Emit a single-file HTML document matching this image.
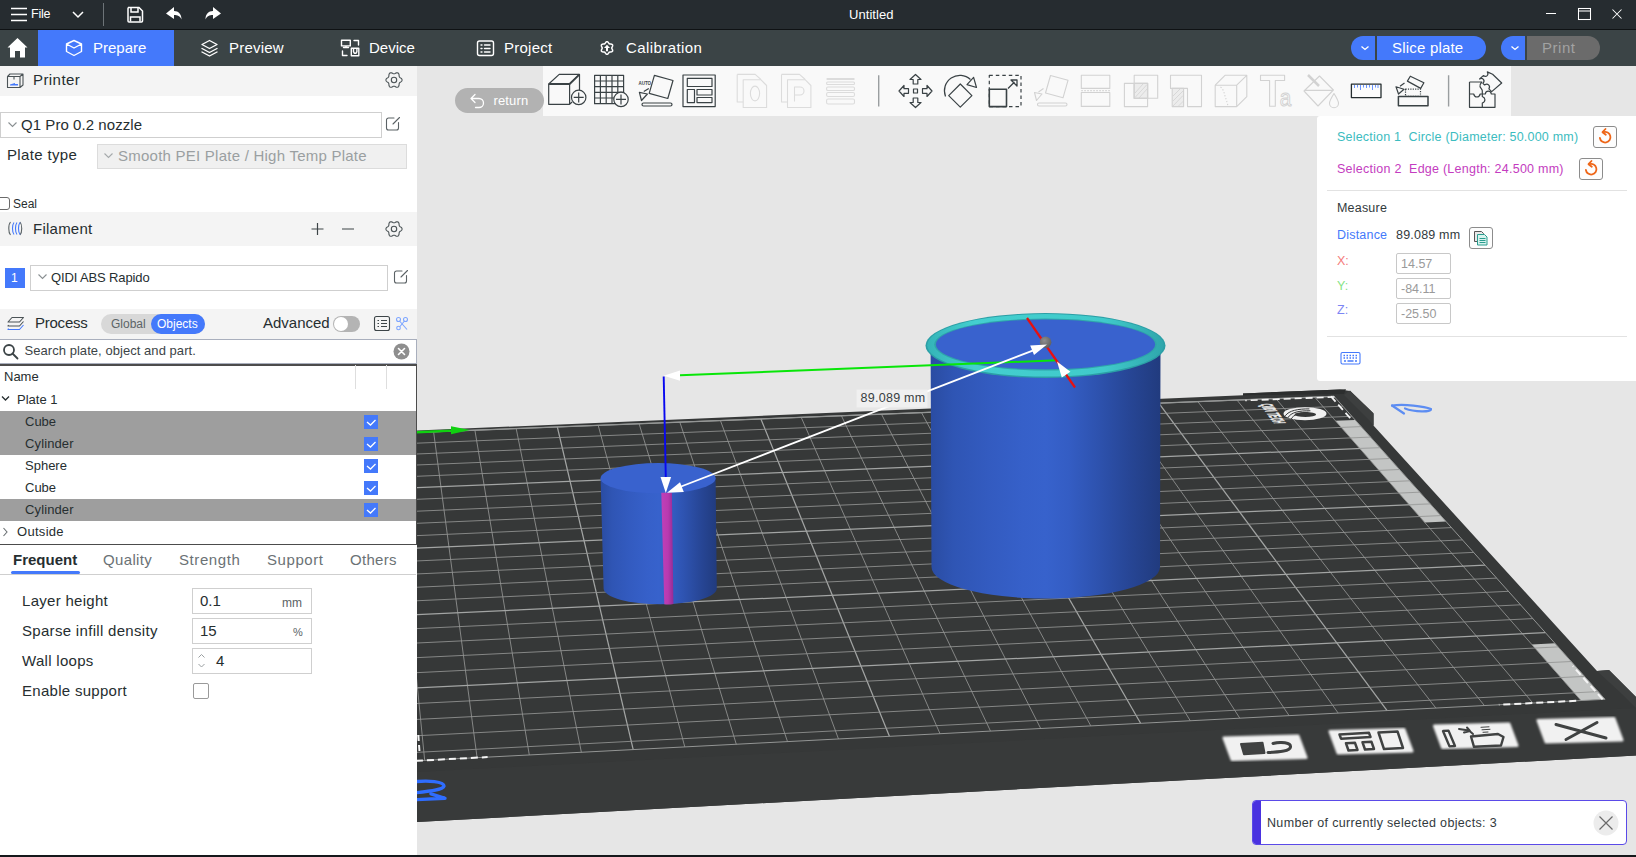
<!DOCTYPE html>
<html lang="en">
<head>
<meta charset="utf-8">
<title>Untitled</title>
<style>
*{box-sizing:border-box;margin:0;padding:0}
html,body{width:1636px;height:857px;overflow:hidden;background:#e6e6e6;font-family:"Liberation Sans",sans-serif;color:#262e30}
.abs{position:absolute}
#app{position:relative;width:1636px;height:857px;overflow:hidden}
#titlebar{left:0;top:0;width:1636px;height:30px;background:#262c30;border-bottom:1px solid #0f1214}
#tabbar{left:0;top:30px;width:1636px;height:36px;background:#3b4446}
.t{position:absolute;white-space:nowrap;line-height:1}
.w{color:#fff}
#left{left:0;top:66px;width:417px;height:789px;background:#fff}
.hdr{position:absolute;left:0;width:417px;background:#f4f4f4}
.box{position:absolute;border:1px solid #cfcfcf;background:#fff}
.row{position:absolute;left:0;width:416px;height:22px}
.sel{background:#9e9e9e}
.cb{position:absolute;width:14px;height:14px;background:#4479fb}
#viewport{left:417px;top:66px;width:1219px;height:789px;background:#e6e6e6;overflow:hidden}
#bottomedge{left:0;top:855px;width:1636px;height:2px;background:#15181b}
</style>
</head>
<body>
<div id="app">
<div id="titlebar" class="abs">
  <svg class="abs" style="left:0;top:0" width="240" height="30" viewBox="0 0 240 30" fill="none" stroke="#fff">
    <path d="M11 8.5H27M11 14.5H27M11 20.5H27" stroke-width="1.6"/>
    <path d="M73 12l5 5 5-5" stroke-width="1.5"/>
    <path d="M103.5 3V26" stroke="#6d7478" stroke-width="1"/>
    <path d="M128 7.5h11l3.500 3.500v10a1 1 0 0 1-1 1h-12.500a1 1 0 0 1-1-1v-12.500a1 1 0 0 1 1-1z" stroke-width="1.5"/>
    <path d="M131 7.500v4.500h7v-4.500M130.500 21.500v-4.500h9.500v4.500" stroke-width="1.5"/>
    <path d="M166 13.500l8-6.500v4c4.500 0 7.500 3 7.500 8.500c-1.500-3.500-4-4.500-7.500-4.500v4z" fill="#fff" stroke="none"/>
    <path d="M221 13.500l-8-6.500v4c-4.500 0-7.500 3-7.500 8.500c1.500-3.500 4-4.500 7.500-4.500v4z" fill="#fff" stroke="none"/>
  </svg>
  <span class="t w" style="left:31px;top:8px;font-size:12.500px;letter-spacing:-0.2px">File</span>
  <span class="t w" style="left:849px;top:8px;font-size:13px;letter-spacing:0.05px">Untitled</span>
  <svg class="abs" style="left:1536px;top:0" width="100" height="30" viewBox="0 0 100 30" fill="none" stroke="#fff" stroke-width="1.050">
    <path d="M10 13.500H20"/>
    <rect x="42.500" y="8.500" width="12" height="11"/><path d="M42.500 11H54.500"/>
    <path d="M76.500 9.500l9 9M85.500 9.500l-9 9"/>
  </svg>
</div>
<div id="tabbar" class="abs">
  <div class="abs" style="left:38px;top:0;width:136px;height:36px;background:#4479fb"></div>
  <svg class="abs" style="left:0;top:0" width="720" height="36" viewBox="0 0 720 36" fill="none" stroke="#fff" stroke-width="1.4" stroke-linejoin="round" stroke-linecap="round">
    <path d="M17.500 8L7.500 17.500H10V27.500H15V21H20V27.500H25V17.500H27.500Z" fill="#fff" stroke="none"/>
    <path d="M74 10.500l7.500 3.500v7.500l-7.500 4l-7.500-4v-7.500z M66.500 14l7.500 4l7.500-4"/>
    <path d="M209.500 10.500l7.500 4l-7.500 4l-7.500-4z M202 18.500l7.500 4l7.500-4 M202 22l7.500 4l7.500-4"/>
    <path d="M341.500 10.300h8.800v5.600h-8.800zM343.500 17.500h5M346 16v1.500M354 10.500h4.500v4.500M342.500 21v4.500h4.500M351.300 18.300h7.500v7.500h-7.500zM353.500 18.500v3.200l.8 1.500h1.800l.8-1.500v-3.200"/>
    <rect x="477.500" y="11" width="16" height="14.500" rx="2"/><path d="M481 15h1M484.500 15h5.500M481 18.500h1M484.500 18.500h5.500M481 22h1M484.500 22h5.500"/>
    <path d="M611.75 18.00 L611.84 18.42 L612.07 18.89 L612.36 19.44 L612.59 20.04 L612.66 20.64 L612.50 21.18 L612.11 21.58 L611.56 21.82 L610.92 21.92 L610.31 21.95 L609.79 21.98 L609.38 22.11 L609.05 22.40 L608.76 22.84 L608.44 23.36 L608.03 23.86 L607.54 24.22 L607.00 24.35 L606.46 24.22 L605.97 23.86 L605.56 23.36 L605.24 22.84 L604.95 22.40 L604.62 22.11 L604.21 21.98 L603.69 21.95 L603.08 21.92 L602.44 21.82 L601.89 21.58 L601.50 21.18 L601.34 20.64 L601.41 20.04 L601.64 19.44 L601.93 18.89 L602.16 18.42 L602.25 18.00 L602.16 17.58 L601.93 17.11 L601.64 16.56 L601.41 15.96 L601.34 15.36 L601.50 14.82 L601.89 14.42 L602.44 14.18 L603.08 14.08 L603.69 14.05 L604.21 14.02 L604.62 13.89 L604.95 13.60 L605.24 13.16 L605.56 12.64 L605.97 12.14 L606.46 11.78 L607.00 11.65 L607.54 11.78 L608.03 12.14 L608.44 12.64 L608.76 13.16 L609.05 13.60 L609.38 13.89 L609.79 14.02 L610.31 14.05 L610.92 14.08 L611.56 14.18 L612.11 14.42 L612.50 14.82 L612.66 15.36 L612.59 15.96 L612.36 16.56 L612.07 17.11 L611.84 17.58Z" stroke-width="1.500"/><path d="M607 14.800l3 3.300h-2v3.200h-2v-3.200h-2z" fill="#fff" stroke="none"/>
  </svg>
  <span class="t w" style="left:93px;top:10px;font-size:15px">Prepare</span>
  <span class="t w" style="left:229px;top:10px;font-size:15px;letter-spacing:0.2px">Preview</span>
  <span class="t w" style="left:369px;top:10px;font-size:15px">Device</span>
  <span class="t w" style="left:504px;top:10px;font-size:15px;letter-spacing:0.25px">Project</span>
  <span class="t w" style="left:626px;top:10px;font-size:15px;letter-spacing:0.42px">Calibration</span>
  <div class="abs" style="left:1351px;top:6px;width:24px;height:24px;background:#4479fb;border-radius:12px 0 0 12px"></div>
  <div class="abs" style="left:1377px;top:6px;width:109px;height:24px;background:#4479fb;border-radius:0 12px 12px 0"></div>
  <span class="t w" style="left:1392px;top:10px;font-size:15px;letter-spacing:0.2px">Slice plate</span>
  <div class="abs" style="left:1501px;top:6px;width:24px;height:24px;background:#4479fb;border-radius:12px 0 0 12px"></div>
  <div class="abs" style="left:1527px;top:6px;width:72.500px;height:24px;background:#6b6b6b;border-radius:0 12px 12px 0"></div>
  <span class="t" style="left:1542px;top:10px;font-size:15px;color:#a2a2a2;letter-spacing:0.55px">Print</span>
  <svg class="abs" style="left:1352px;top:6px" width="180" height="24" viewBox="0 0 180 24" fill="none" stroke="#fff" stroke-width="1.3"><path d="M9.500 10.500l3.500 3l3.500-3M159.500 10.500l3.500 3l3.500-3"/></svg>
</div>
<div id="left" class="abs">
  <!-- Printer header  y66-96 -->
  <div class="hdr" style="top:0;height:30px"></div>
  <svg class="abs" style="left:6px;top:5px" width="20" height="20" viewBox="0 0 20 20" fill="none" stroke="#4b5356" stroke-width="1.1" stroke-linejoin="round">
    <path d="M1.500 5.500h12.500v11h-12.500zM1.500 5.500l2.500-2.500h13l-3 2.500M17 3v11l-3 2.500M8 5.500v3"/>
    <path d="M4 13.500l5-1.500v1h3v1.500h-8z" fill="#4479fb" stroke="none"/>
  </svg>
  <span class="t" style="left:33px;top:6px;font-size:15px;letter-spacing:0.43px">Printer</span>
  <svg class="abs gear" style="left:385px;top:5px" width="18" height="18" viewBox="0 0 18 18" fill="none" stroke="#4b5356" stroke-width="1.1"><path d="M17.10 9.00 L16.94 9.69 L16.51 10.32 L15.91 10.85 L15.27 11.28 L14.73 11.67 L14.37 12.10 L14.18 12.63 L14.11 13.29 L14.06 14.06 L13.90 14.84 L13.57 15.53 L13.05 16.01 L12.37 16.23 L11.61 16.17 L10.85 15.91 L10.16 15.57 L9.55 15.30 L9.00 15.20 L8.45 15.30 L7.84 15.57 L7.15 15.91 L6.39 16.17 L5.63 16.23 L4.95 16.01 L4.43 15.53 L4.10 14.84 L3.94 14.06 L3.89 13.29 L3.82 12.63 L3.63 12.10 L3.27 11.67 L2.73 11.28 L2.09 10.85 L1.49 10.32 L1.06 9.69 L0.90 9.00 L1.06 8.31 L1.49 7.68 L2.09 7.15 L2.73 6.72 L3.27 6.33 L3.63 5.90 L3.82 5.37 L3.89 4.71 L3.94 3.94 L4.10 3.16 L4.43 2.47 L4.95 1.99 L5.63 1.77 L6.39 1.83 L7.15 2.09 L7.84 2.43 L8.45 2.70 L9.00 2.80 L9.55 2.70 L10.16 2.43 L10.85 2.09 L11.61 1.83 L12.37 1.77 L13.05 1.99 L13.57 2.47 L13.90 3.16 L14.06 3.94 L14.11 4.71 L14.18 5.37 L14.37 5.90 L14.73 6.33 L15.27 6.72 L15.91 7.15 L16.51 7.68 L16.94 8.31Z" stroke-linejoin="round"/><circle cx="9" cy="9" r="2.700"/></svg>
  <!-- nozzle select y112-138 -->
  <div class="box" style="left:0;top:46px;width:382px;height:26px"></div>
  <svg class="abs" style="left:7px;top:55px" width="12" height="8" viewBox="0 0 12 8" fill="none" stroke="#8a9092" stroke-width="1.1"><path d="M1.500 1.500l4 4l4-4"/></svg>
  <span class="t" style="left:21px;top:50.500px;font-size:15px;letter-spacing:0.06px">Q1 Pro 0.2 nozzle</span>
  <svg class="abs edit" style="left:385px;top:50px" width="16" height="16" viewBox="0 0 16 16" fill="none" stroke="#5b6265" stroke-width="1.1" stroke-linecap="round"><path d="M9 2h-5.500a2 2 0 0 0-2 2v8a2 2 0 0 0 2 2h8a2 2 0 0 0 2-2v-5.500M8 8l6.500-6.500"/></svg>
  <!-- plate type y144-168 -->
  <span class="t" style="left:7px;top:81px;font-size:15px;letter-spacing:0.34px">Plate type</span>
  <div class="box" style="left:97px;top:78px;width:310px;height:25px;background:#f0f0f0;border-color:#dcdcdc"></div>
  <svg class="abs" style="left:103px;top:86px" width="12" height="8" viewBox="0 0 12 8" fill="none" stroke="#a5a9ab" stroke-width="1.1"><path d="M1.500 1.500l4 4l4-4"/></svg>
  <span class="t" style="left:118px;top:82px;font-size:15px;color:#9a9fa1;letter-spacing:0.24px">Smooth PEI Plate / High Temp Plate</span>
  <!-- seal y198-208 -->
  <div class="abs" style="left:-3px;top:131px;width:12.500px;height:13px;border:1px solid #6a6a6a;border-radius:3px;background:#fff"></div>
  <span class="t" style="left:13px;top:132px;font-size:12px">Seal</span>
  <!-- Filament header y212-246 -->
  <div class="hdr" style="top:146px;height:34px"></div>
  <svg class="abs" style="left:7px;top:154px" width="17" height="17" viewBox="0 0 17 17" fill="none" stroke-width="1.100"><path d="M3.500 2c-2.300 2.500-2.300 10.500 0 13M13 2c2.300 2.500 2.300 10.500 0 13" stroke="#5a6265"/><path d="M7 2.500c-2 2.500-2 9.500 0 12M10 2.500c-2 2.500-2 9.500 0 12M13 2.500c-2 2.500-2 9.500 0 12" stroke="#4479fb"/></svg>
  <span class="t" style="left:33px;top:155px;font-size:15px;letter-spacing:0.24px">Filament</span>
  <svg class="abs" style="left:308px;top:154px" width="100" height="18" viewBox="0 0 100 18" fill="none" stroke="#3c4447" stroke-width="1.2"><path d="M3.500 9h12M9.500 3v12M34 9h12"/></svg>
  <svg class="abs gear" style="left:385px;top:154px" width="18" height="18" viewBox="0 0 18 18" fill="none" stroke="#4b5356" stroke-width="1.1"><path d="M17.10 9.00 L16.94 9.69 L16.51 10.32 L15.91 10.85 L15.27 11.28 L14.73 11.67 L14.37 12.10 L14.18 12.63 L14.11 13.29 L14.06 14.06 L13.90 14.84 L13.57 15.53 L13.05 16.01 L12.37 16.23 L11.61 16.17 L10.85 15.91 L10.16 15.57 L9.55 15.30 L9.00 15.20 L8.45 15.30 L7.84 15.57 L7.15 15.91 L6.39 16.17 L5.63 16.23 L4.95 16.01 L4.43 15.53 L4.10 14.84 L3.94 14.06 L3.89 13.29 L3.82 12.63 L3.63 12.10 L3.27 11.67 L2.73 11.28 L2.09 10.85 L1.49 10.32 L1.06 9.69 L0.90 9.00 L1.06 8.31 L1.49 7.68 L2.09 7.15 L2.73 6.72 L3.27 6.33 L3.63 5.90 L3.82 5.37 L3.89 4.71 L3.94 3.94 L4.10 3.16 L4.43 2.47 L4.95 1.99 L5.63 1.77 L6.39 1.83 L7.15 2.09 L7.84 2.43 L8.45 2.70 L9.00 2.80 L9.55 2.70 L10.16 2.43 L10.85 2.09 L11.61 1.83 L12.37 1.77 L13.05 1.99 L13.57 2.47 L13.90 3.16 L14.06 3.94 L14.11 4.71 L14.18 5.37 L14.37 5.90 L14.73 6.33 L15.27 6.72 L15.91 7.15 L16.51 7.68 L16.94 8.31Z" stroke-linejoin="round"/><circle cx="9" cy="9" r="2.700"/></svg>
  <!-- filament row y265-290 -->
  <div class="abs" style="left:5px;top:202px;width:20px;height:20px;background:#4479fb"></div>
  <span class="t w" style="left:11px;top:206px;font-size:12px">1</span>
  <div class="box" style="left:30px;top:199px;width:358px;height:26px"></div>
  <svg class="abs" style="left:37px;top:207px" width="12" height="8" viewBox="0 0 12 8" fill="none" stroke="#8a9092" stroke-width="1.1"><path d="M1.500 1.500l4 4l4-4"/></svg>
  <span class="t" style="left:51px;top:205px;font-size:13px;letter-spacing:-0.13px">QIDI ABS Rapido</span>
  <svg class="abs edit" style="left:393px;top:203px" width="16" height="16" viewBox="0 0 16 16" fill="none" stroke="#5b6265" stroke-width="1.1" stroke-linecap="round"><path d="M9 2h-5.500a2 2 0 0 0-2 2v8a2 2 0 0 0 2 2h8a2 2 0 0 0 2-2v-5.500M8 8l6.500-6.500"/></svg>
  <!-- Process header y309-338 -->
  <div class="hdr" style="top:243px;height:30px"></div>
  <svg class="abs" style="left:7px;top:249px" width="18" height="17" viewBox="0 0 18 17" fill="none" stroke-width="1.1" stroke-linejoin="round"><path d="M5 2.500h11.500l-4 4.500h-11.500z" stroke="#4b5356"/><path d="M1.500 10l-.5 1h11.500l4-4.500" stroke="#4b5356"/><path d="M1.500 13.500l-.5 1h11.500l4-4.500" stroke="#4479fb"/></svg>
  <span class="t" style="left:35px;top:249px;font-size:15px;letter-spacing:-0.24px">Process</span>
  <div class="abs" style="left:101px;top:248px;width:104px;height:20px;border-radius:10px;background:#d8d8d8"></div>
  <div class="abs" style="left:151px;top:248px;width:54px;height:20px;border-radius:10px;background:#4479fb"></div>
  <span class="t" style="left:111px;top:252px;font-size:12px;color:#5c6467">Global</span>
  <span class="t w" style="left:157px;top:252px;font-size:12px">Objects</span>
  <span class="t" style="left:263px;top:249px;font-size:15px">Advanced</span>
  <div class="abs" style="left:333px;top:250px;width:27px;height:16px;border-radius:8px;background:#b4b4b4"></div>
  <div class="abs" style="left:334px;top:251px;width:14px;height:14px;border-radius:7px;background:#fff"></div>
  <svg class="abs" style="left:373px;top:249px" width="40" height="18" viewBox="0 0 40 18" fill="none" stroke-width="1.1"><rect x="1.500" y="1.500" width="15" height="14" rx="2" stroke="#3c4447"/><path d="M4.500 5.500h1.500M8 5.500h6M4.500 8.500h1.500M8 8.500h6M4.500 11.500h1.500M8 11.500h6" stroke="#3c4447"/><g stroke="#7ea6ff"><circle cx="25.500" cy="4.500" r="2"/><circle cx="32.500" cy="4.500" r="2"/><circle cx="25.500" cy="13" r="1.800"/><path d="M27 6.500l7 8M31 6.500l-4 5"/></g></svg>
  <!-- search y340-363 -->
  <div class="abs" style="left:-1px;top:273px;width:418px;height:25px;border:1px solid #a9afbd;background:#fff"></div>
  <svg class="abs" style="left:2px;top:277px" width="18" height="18" viewBox="0 0 18 18" fill="none" stroke="#3c4447" stroke-width="1.800"><circle cx="7" cy="7" r="5"/><path d="M10.500 10.500l5 5" stroke-linecap="round"/></svg>
  <span class="t" style="left:24.5px;top:278px;font-size:13px;color:#3c4447;letter-spacing:0.05px">Search plate, object and part.</span>
  <svg class="abs" style="left:393px;top:277px" width="17" height="17" viewBox="0 0 17 17"><circle cx="8.500" cy="8.500" r="8" fill="#8e8e8e"/><path d="M5.500 5.500l6 6M11.500 5.500l-6 6" stroke="#fff" stroke-width="1.600" stroke-linecap="round"/></svg>
  <!-- table y364-544 -->
  <div class="abs" style="left:-1px;top:298px;width:418px;height:181px;border:1px solid #4c4c4c;border-top:2px solid #4c4c4c;background:#fff"></div>
  <span class="t" style="left:4px;top:304px;font-size:13px">Name</span>
  <div class="abs" style="left:355px;top:299px;width:1px;height:24px;background:#dedede"></div>
  <div class="abs" style="left:386px;top:299px;width:1px;height:24px;background:#dedede"></div>
  <svg class="abs" style="left:1px;top:329px" width="10" height="8" viewBox="0 0 10 8" fill="none" stroke="#262e30" stroke-width="1.300"><path d="M1 1.500l3.500 3.500l3.500-3.500"/></svg>
  <span class="t" style="left:17px;top:327px;font-size:13px">Plate 1</span>
  <div class="row sel" style="top:345px"></div><span class="t" style="left:25px;top:349px;font-size:13px">Cube</span>
  <div class="row sel" style="top:367px"></div><span class="t" style="left:25px;top:371px;font-size:13px;letter-spacing:0.12px">Cylinder</span>
  <span class="t" style="left:25px;top:393px;font-size:13px">Sphere</span>
  <span class="t" style="left:25px;top:415px;font-size:13px">Cube</span>
  <div class="row sel" style="top:433px"></div><span class="t" style="left:25px;top:437px;font-size:13px;letter-spacing:0.12px">Cylinder</span>
  <svg class="abs" style="left:2px;top:461px" width="8" height="10" viewBox="0 0 8 10" fill="none" stroke="#6a7073" stroke-width="1.100"><path d="M1.500 1l3.500 4l-3.500 4"/></svg>
  <span class="t" style="left:17px;top:459px;font-size:13px;letter-spacing:0.3px">Outside</span>
  <div class="cb" style="left:364px;top:349px"></div><div class="cb" style="left:364px;top:371px"></div><div class="cb" style="left:364px;top:393px"></div><div class="cb" style="left:364px;top:415px"></div><div class="cb" style="left:364px;top:437px"></div>
  <svg class="abs" style="left:364px;top:349px" width="14" height="102" viewBox="0 0 14 102" fill="none" stroke="#fff" stroke-width="1.300"><path d="M3 7l3.500 3l5-5M3 29l3.500 3l5-5M3 51l3.500 3l5-5M3 73l3.500 3l5-5M3 95l3.500 3l5-5"/></svg>
  
  <!-- tabs y559 -->
  <span class="t" style="left:13px;top:486px;font-size:15px;font-weight:bold">Frequent</span>
  <span class="t" style="left:103px;top:486px;font-size:15px;color:#6b7275;letter-spacing:0.36px">Quality</span>
  <span class="t" style="left:179px;top:486px;font-size:15px;color:#6b7275;letter-spacing:0.59px">Strength</span>
  <span class="t" style="left:267px;top:486px;font-size:15px;color:#6b7275;letter-spacing:0.57px">Support</span>
  <span class="t" style="left:350px;top:486px;font-size:15px;color:#6b7275;letter-spacing:0.3px">Others</span>
  <div class="abs" style="left:11px;top:505px;width:69px;height:3px;border-radius:2px;background:#4479fb"></div>
  <div class="abs" style="left:0;top:508px;width:416px;height:1px;background:#cfcfcf"></div>
  <!-- settings -->
  <span class="t" style="left:22px;top:527px;font-size:15px;letter-spacing:0.29px">Layer height</span>
  <div class="box" style="left:192px;top:522px;width:120px;height:26px"></div>
  <span class="t" style="left:200px;top:527px;font-size:15px">0.1</span>
  <span class="t" style="left:282px;top:531px;font-size:12px;color:#5b6265">mm</span>
  <span class="t" style="left:22px;top:557px;font-size:15px;letter-spacing:0.31px">Sparse infill density</span>
  <div class="box" style="left:192px;top:552px;width:120px;height:26px"></div>
  <span class="t" style="left:200px;top:557px;font-size:15px">15</span>
  <span class="t" style="left:293px;top:561px;font-size:11px;color:#5b6265">%</span>
  <span class="t" style="left:22px;top:587px;font-size:15px;letter-spacing:0.3px">Wall loops</span>
  <div class="box" style="left:192px;top:582px;width:120px;height:26px"></div>
  <svg class="abs" style="left:196px;top:586px" width="12" height="18" viewBox="0 0 12 18" fill="none" stroke="#9a9fa1" stroke-width="1"><path d="M2.500 5.500l3-3l3 3M2.500 12l3 3l3-3"/></svg>
  <span class="t" style="left:216px;top:587px;font-size:15px">4</span>
  <span class="t" style="left:22px;top:617px;font-size:15px;letter-spacing:0.29px">Enable support</span>
  <div class="abs" style="left:193px;top:617px;width:16px;height:16px;border:1px solid #9a9a9a;border-radius:2px;background:#fff"></div>
</div>
<div id="viewport" class="abs">
<svg class="abs" style="left:0;top:0" width="1219" height="789" viewBox="417 66 1219 789">
<defs>
<linearGradient id="cylS" x1="0" x2="1" y1="0" y2="0"><stop offset="0" stop-color="#2a4ca2"/><stop offset="0.1" stop-color="#2f55b4"/><stop offset="0.25" stop-color="#335bc0"/><stop offset="0.4" stop-color="#3660c9"/><stop offset="0.5" stop-color="#3762cc"/><stop offset="0.6" stop-color="#345dc4"/><stop offset="0.72" stop-color="#2e53b0"/><stop offset="0.86" stop-color="#274696"/><stop offset="1" stop-color="#213b7e"/></linearGradient>
<linearGradient id="cylB" x1="0" x2="1" y1="0" y2="0"><stop offset="0" stop-color="#2a4ca2"/><stop offset="0.1" stop-color="#2f55b4"/><stop offset="0.25" stop-color="#335bc0"/><stop offset="0.4" stop-color="#3660c9"/><stop offset="0.5" stop-color="#3762cc"/><stop offset="0.6" stop-color="#345dc4"/><stop offset="0.72" stop-color="#2e53b0"/><stop offset="0.86" stop-color="#274696"/><stop offset="1" stop-color="#213b7e"/></linearGradient>
<filter id="blur1"><feGaussianBlur stdDeviation="0.8"/></filter>
</defs>
<polygon fill="#363838" points="417,430.6 1243,395.2 1243,393.4 1340,389.5 1350,391 1373,413 1373,425 1597,671 1609,670 1636,697 1636,755.6 417,822"/>
<polygon fill="#383a3a" points="417,772 1636,708 1636,755.6 417,822"/>
<polygon fill="#c3c5c4" points="1424.8,522.5 1446.1,521.6 1355.1,419.9 1335.4,420.7"/>
<polygon fill="#c3c5c4" points="1581.0,700.5 1605.0,699.3 1554.9,643.3 1531.7,644.4"/>
<g><line x1="372.0" y1="763.1" x2="350.5" y2="435.1" stroke="#a3a5a4" stroke-width="1.25"/><line x1="424.7" y1="760.4" x2="392.1" y2="433.5" stroke="#939594" stroke-width="0.85"/><line x1="477.1" y1="757.7" x2="433.6" y2="431.8" stroke="#939594" stroke-width="0.85"/><line x1="529.3" y1="755.0" x2="474.9" y2="430.2" stroke="#939594" stroke-width="0.85"/><line x1="581.4" y1="752.3" x2="516.2" y2="428.6" stroke="#939594" stroke-width="0.85"/><line x1="633.2" y1="749.6" x2="557.3" y2="426.9" stroke="#a3a5a4" stroke-width="1.25"/><line x1="684.8" y1="746.9" x2="598.2" y2="425.3" stroke="#939594" stroke-width="0.85"/><line x1="736.3" y1="744.3" x2="639.1" y2="423.7" stroke="#939594" stroke-width="0.85"/><line x1="787.5" y1="741.6" x2="679.8" y2="422.1" stroke="#939594" stroke-width="0.85"/><line x1="838.5" y1="739.0" x2="720.4" y2="420.5" stroke="#939594" stroke-width="0.85"/><line x1="889.4" y1="736.3" x2="760.9" y2="418.9" stroke="#a3a5a4" stroke-width="1.25"/><line x1="940.0" y1="733.7" x2="801.2" y2="417.3" stroke="#939594" stroke-width="0.85"/><line x1="990.5" y1="731.1" x2="841.4" y2="415.7" stroke="#939594" stroke-width="0.85"/><line x1="1040.7" y1="728.5" x2="881.5" y2="414.2" stroke="#939594" stroke-width="0.85"/><line x1="1090.8" y1="725.9" x2="921.5" y2="412.6" stroke="#939594" stroke-width="0.85"/><line x1="1140.6" y1="723.3" x2="961.3" y2="411.0" stroke="#a3a5a4" stroke-width="1.25"/><line x1="1190.3" y1="720.8" x2="1001.1" y2="409.4" stroke="#939594" stroke-width="0.85"/><line x1="1239.8" y1="718.2" x2="1040.7" y2="407.9" stroke="#939594" stroke-width="0.85"/><line x1="1289.1" y1="715.6" x2="1080.2" y2="406.3" stroke="#939594" stroke-width="0.85"/><line x1="1338.2" y1="713.1" x2="1119.6" y2="404.8" stroke="#939594" stroke-width="0.85"/><line x1="1387.1" y1="710.6" x2="1158.8" y2="403.2" stroke="#a3a5a4" stroke-width="1.25"/><line x1="1435.9" y1="708.1" x2="1197.9" y2="401.7" stroke="#939594" stroke-width="0.85"/><line x1="1484.4" y1="705.5" x2="1237.0" y2="400.1" stroke="#939594" stroke-width="0.85"/><line x1="1532.8" y1="703.0" x2="1275.9" y2="398.6" stroke="#939594" stroke-width="0.85"/><line x1="1581.0" y1="700.5" x2="1314.7" y2="397.1" stroke="#939594" stroke-width="0.85"/><line x1="350.5" y1="435.1" x2="1334.0" y2="396.3" stroke="#a3a5a4" stroke-width="1.25"/><line x1="351.2" y1="445.8" x2="1342.9" y2="406.2" stroke="#939594" stroke-width="0.85"/><line x1="351.9" y1="456.6" x2="1351.9" y2="416.3" stroke="#939594" stroke-width="0.85"/><line x1="352.6" y1="467.6" x2="1361.1" y2="426.6" stroke="#939594" stroke-width="0.85"/><line x1="353.4" y1="478.9" x2="1370.5" y2="437.1" stroke="#939594" stroke-width="0.85"/><line x1="354.1" y1="490.3" x2="1380.0" y2="447.7" stroke="#a3a5a4" stroke-width="1.25"/><line x1="354.9" y1="501.9" x2="1389.7" y2="458.5" stroke="#939594" stroke-width="0.85"/><line x1="355.7" y1="513.8" x2="1399.5" y2="469.5" stroke="#939594" stroke-width="0.85"/><line x1="356.5" y1="525.9" x2="1409.5" y2="480.8" stroke="#939594" stroke-width="0.85"/><line x1="357.3" y1="538.2" x2="1419.7" y2="492.2" stroke="#939594" stroke-width="0.85"/><line x1="358.1" y1="550.7" x2="1430.1" y2="503.8" stroke="#a3a5a4" stroke-width="1.25"/><line x1="358.9" y1="563.5" x2="1440.7" y2="515.6" stroke="#939594" stroke-width="0.85"/><line x1="359.8" y1="576.5" x2="1451.5" y2="527.6" stroke="#939594" stroke-width="0.85"/><line x1="360.6" y1="589.8" x2="1462.4" y2="539.9" stroke="#939594" stroke-width="0.85"/><line x1="361.5" y1="603.3" x2="1473.6" y2="552.4" stroke="#939594" stroke-width="0.85"/><line x1="362.4" y1="617.1" x2="1485.0" y2="565.1" stroke="#a3a5a4" stroke-width="1.25"/><line x1="363.4" y1="631.1" x2="1496.6" y2="578.1" stroke="#939594" stroke-width="0.85"/><line x1="364.3" y1="645.5" x2="1508.4" y2="591.3" stroke="#939594" stroke-width="0.85"/><line x1="365.3" y1="660.1" x2="1520.5" y2="604.8" stroke="#939594" stroke-width="0.85"/><line x1="366.2" y1="675.1" x2="1532.8" y2="618.6" stroke="#939594" stroke-width="0.85"/><line x1="367.2" y1="690.3" x2="1545.3" y2="632.6" stroke="#a3a5a4" stroke-width="1.25"/><line x1="368.3" y1="705.9" x2="1558.1" y2="646.9" stroke="#939594" stroke-width="0.85"/><line x1="369.3" y1="721.8" x2="1571.2" y2="661.5" stroke="#939594" stroke-width="0.85"/><line x1="370.4" y1="738.1" x2="1584.5" y2="676.4" stroke="#939594" stroke-width="0.85"/><line x1="371.4" y1="754.7" x2="1598.1" y2="691.6" stroke="#939594" stroke-width="0.85"/><polygon fill="none" stroke="#939594" stroke-width="1" points="372.0,763.1 1605.0,699.3 1334.0,396.3 350.5,435.1"/></g>
<line x1="372.0" y1="763.1" x2="487.6" y2="757.1" stroke="#f4f4f4" stroke-width="2" stroke-dasharray="7 4"/>
<line x1="375.2" y1="762.9" x2="372.7" y2="726.5" stroke="#f4f4f4" stroke-width="2" stroke-dasharray="7 4"/>
<line x1="418.3" y1="735" x2="419.6" y2="753" stroke="#f4f4f4" stroke-width="2" stroke-dasharray="6 4"/>
<line x1="1576.2" y1="700.8" x2="1498.9" y2="704.8" stroke="#f4f4f4" stroke-width="2" stroke-dasharray="7 4"/>
<line x1="1602.6" y1="699.4" x2="1572.8" y2="666.0" stroke="#f4f4f4" stroke-width="2" stroke-dasharray="7 4"/>
<line x1="1334.6" y1="397.0" x2="1245.3" y2="400.5" stroke="#f4f4f4" stroke-width="1.6" stroke-dasharray="7 4"/>
<line x1="1330.9" y1="396.4" x2="1351.5" y2="419.5" stroke="#f4f4f4" stroke-width="1.8" stroke-dasharray="7 4"/>
<path fill="url(#cylS)" d="M600.6,478.3 L603.6,588.5 A56.6,15.8 0 0 0 716.8,588.5 L715.6,478.3 Z"/>
<ellipse cx="658.1" cy="478.3" rx="57.5" ry="15.2" fill="#3962ce"/>
<defs><linearGradient id="mag" x1="0" x2="1"><stop offset="0" stop-color="#c040b8"/><stop offset="0.55" stop-color="#b83ab0"/><stop offset="1" stop-color="#942c94"/></linearGradient></defs>
<path fill="url(#mag)" d="M661.3,492.8 L664.3,604.3 Q669,605 673.4,604 L671.9,492.8 Z"/>
<path fill="url(#cylB)" d="M930.6,345.5 L931.5,567 A114.2,31.5 0 0 0 1160,567 L1160.5,345.5 Z"/>
<defs><linearGradient id="teal" x1="0" x2="1"><stop offset="0" stop-color="#34b4b8"/><stop offset="0.2" stop-color="#44cfcf"/><stop offset="0.75" stop-color="#40caca"/><stop offset="1" stop-color="#2fa6ac"/></linearGradient></defs>
<ellipse cx="1045.5" cy="345.5" rx="120" ry="32.4" fill="#2b9fa6"/>
<ellipse cx="1045.5" cy="345.3" rx="118.3" ry="31.2" fill="url(#teal)"/>
<ellipse cx="1045.5" cy="344.5" rx="111.3" ry="25.9" fill="#2fa4aa"/>
<ellipse cx="1045.5" cy="344.4" rx="109.6" ry="24.9" fill="#3962ce"/>
<line x1="680" y1="375.3" x2="1057" y2="360.3" stroke="#08e608" stroke-width="2"/>
<polygon fill="#fff" points="663.7,375.8 680,370.4 680,380.8"/>
<line x1="663.7" y1="376.5" x2="665.8" y2="478" stroke="#0808f0" stroke-width="1.9"/>
<polygon fill="#fff" points="665.8,493 660.5,477 671.1,477"/>
<line x1="1027" y1="318" x2="1075" y2="387.5" stroke="#e81010" stroke-width="2.2"/>
<defs><radialGradient id="sph" cx="0.4" cy="0.35" r="0.7"><stop offset="0" stop-color="#8e8e8e"/><stop offset="1" stop-color="#5c5c5c"/></radialGradient></defs>
<circle cx="1045.6" cy="342.3" r="5.8" fill="url(#sph)"/>
<line x1="676" y1="488.5" x2="1036" y2="349.3" stroke="#fff" stroke-width="1.8"/>
<polygon fill="#fff" points="667.0,492.8 680.0,482.2 683.8,491.9"/>
<polygon fill="#fff" points="1047.0,344.5 1034.0,355.1 1030.2,345.4"/>
<polygon fill="#fff" points="1057.0,361.5 1070.4,371.7 1061.8,377.6"/>
<rect x="856.5" y="389.5" width="71" height="18" fill="#f1f1f1" fill-opacity="0.92"/>
<text x="893" y="402.3" text-anchor="middle" font-size="12.5" letter-spacing="0.25" fill="#384043" font-family="Liberation Sans, sans-serif">89.089 mm</text>
<line x1="417" y1="432.3" x2="452" y2="430.6" stroke="#10d010" stroke-width="2.4"/>
<polygon fill="#10d010" points="470,430 451,426.2 451,434.2"/>
<polygon fill="#3d3f3f" points="1344,395 1350,390.5 1373.8,413.6 1373.8,426 1369,420"/>
<polygon fill="#2c2e2e" points="1243,395.2 1243,393.4 1346,389.2 1344,394"/>
<polygon fill="#3d3f3f" points="1597,671 1609,670 1636,697 1636,708 1622,694"/>
<path fill="#f0f0f0" fill-rule="evenodd" d="M1283.500,413.700 a21.500,6.500 0 1 0 43,0 a21.500,6.500 0 1 0 -43,0 Z M1294.500,414.600 a10.800,2.500 0 1 0 21.600,0 a10.800,2.500 0 1 0 -21.600,0 Z"/>
<g fill="none" stroke="#363838" stroke-width="1" stroke-linecap="round"><path d="M1285.500,415.500 C1289,410.500 1298,408.800 1309,408.900"/><path d="M1288,417.500 C1291,412.300 1299,410.600 1310,410.800"/><path d="M1291,419 C1293.500,414.500 1300,412.500 1308,412.300"/></g>
<text transform="matrix(0.596,0.8125,-2.1,0.08,1259.9,404)" font-size="8" font-weight="bold" fill="#ededed" stroke="#ededed" stroke-width="0.35" font-family="Liberation Sans, sans-serif" textLength="24" lengthAdjust="spacingAndGlyphs">QIDI TECH</text>
<g fill="none" stroke="#5d8df2" stroke-width="2.2" stroke-linecap="round" stroke-linejoin="round"><path d="M1392,405.500 L1404,413.500"/><path d="M1392,405.500 C1404,404 1424,406 1431,409 C1432,412.500 1414,412 1405,408.500"/></g>
<g fill="none" stroke="#2f6dff" stroke-width="3.4" stroke-linecap="round" stroke-linejoin="round"><path d="M415,781.800 C428,780.200 444,781.500 444,786 C443,790 429,791.500 415,792.800"/><path d="M415,799.700 L445,798.300 L431,793.800"/></g>
<defs><filter id="blur2"><feGaussianBlur stdDeviation="0.45"/></filter></defs>
<polygon filter="url(#blur1)" fill="#f1f1f1" stroke="#f1f1f1" stroke-width="3" stroke-linejoin="round" points="1224,738.0 1298,736.0 1306,757.5 1232,759.5"/>
<g filter="url(#blur2)" fill="none" stroke="#404242" stroke-width="3" stroke-linejoin="round" stroke-linecap="round"><polygon fill="#404242" stroke-width="2" points="1241,744 1262.500,742.800 1264.500,753 1244,754.200"/><path d="M1273,743.500 C1281,741.500 1291,742.500 1290.500,747 C1290,751 1280,752 1268,752.500"/></g>
<polygon filter="url(#blur1)" fill="#f1f1f1" stroke="#f1f1f1" stroke-width="3" stroke-linejoin="round" points="1330,731.5 1404,729.5 1412,751.0 1338,753.0"/>
<g filter="url(#blur2)" fill="none" stroke="#404242" stroke-width="2.500" stroke-linejoin="round"><path d="M1339.500,734.500 L1369,732.800 L1370.500,737 L1341,738.700 Z"/><path d="M1346,743.300 L1355,742.800 L1357.500,750 L1348.500,750.500 Z"/><path d="M1362.500,742.300 L1371.500,741.800 L1374,749 L1365,749.500 Z"/><path d="M1378.500,732.500 L1397.500,731.400 L1403,748 L1384,749.100 Z"/></g>
<polygon filter="url(#blur1)" fill="#f1f1f1" stroke="#f1f1f1" stroke-width="3" stroke-linejoin="round" points="1434.5,726.0 1509,724.0 1517,745.5 1442.5,747.5"/>
<g filter="url(#blur2)" fill="none" stroke="#404242" stroke-width="2.400" stroke-linejoin="round" stroke-linecap="round"><path d="M1443,731 L1448.500,730.600 L1455,746 L1449.500,746.400 Z"/><path d="M1471,736.500 L1498,734 L1503.500,737 L1501,745.500 L1474,746.800 Z"/><path d="M1459,729 L1469,730.500 L1473,734 M1467,727.500 L1470,731 L1464,732.500" stroke-width="2"/><path d="M1481,727.300 L1489,726.800 M1482,729.800 L1490,729.300 M1483,732.300 L1488,732" stroke-width="1"/></g>
<polygon filter="url(#blur1)" fill="#f1f1f1" stroke="#f1f1f1" stroke-width="3" stroke-linejoin="round" points="1538,720.5 1614,718.5 1622,740.0 1546,742.0"/>
<g filter="url(#blur2)" fill="none" stroke="#404242" stroke-width="3" stroke-linecap="round"><path d="M1556,724.500 L1606,738 M1597,722.500 L1566,739.500"/></g>
<!--OBJECTS-->
</svg>
<!--VPEND-->
</div>
<div class="abs" style="left:543px;top:66px;width:968px;height:50px;background:#f9f9f9"></div>
<div class="abs" style="left:455px;top:88px;width:89px;height:25px;border-radius:12.5px;background:#b2b2b2"></div>
<svg class="abs" style="left:455px;top:88px" width="89" height="25" viewBox="0 0 89 25" fill="none" stroke="#fff" stroke-width="1.300" stroke-linecap="round" stroke-linejoin="round"><path d="M20 6.500l-4 4l4 4M16 10.500h8a4.500 4.500 0 0 1 0 9h-3.500"/></svg>
<span class="t w" style="left:493.5px;top:94px;font-size:13px;letter-spacing:0.15px">return</span>
<svg class="abs" style="left:544px;top:66px" width="967" height="50" viewBox="544 66 967 50" fill="none" stroke="#3a4245" stroke-width="1.200" stroke-linejoin="round">
<!-- 1 add cube -->
<path d="M548.700 84h20.900v20.300h-20.900zM548.700 84l10.500-9.600h20.300l-9.900 9.600M579.500 74.400v15.500M569.600 104.300l2.500-2.300" />
<path d="M548.700 84h20.900l9.900-9.600" stroke-width="1.800"/>
<circle cx="578.700" cy="97.400" r="7.200" fill="#f9f9f9"/><path d="M573.700 97.400h10M578.700 92.400v10"/>
<!-- 2 add plate grid -->
<path d="M594.600 75.300h29v28.400h-29zM600.400 75.300v28.400M606.200 75.300v28.400M612 75.300v28.400M617.800 75.300v28.400M594.600 81h29M594.600 86.700h29M594.600 92.400h29M594.600 98h29"/>
<circle cx="621" cy="99.400" r="7.200" fill="#f9f9f9"/><path d="M616 99.400h10M621 94.400v10"/>
<!-- 3 auto orient -->
<path d="M654.400 75.300l18.600 5.200l-5.200 18l-18.600-5.200z"/>
<path d="M648.800 88.400l-5 3.200M639.400 92.300l8 1.700l-5.900 6.500z"/>
<rect x="642" y="103" width="30" height="3" rx="1.500"/>
<!-- 4 layout -->
<rect x="683" y="75" width="32.200" height="31.600"/><rect x="687.300" y="78.300" width="24.700" height="8.200"/><rect x="687.300" y="89.500" width="7.200" height="13.100"/><rect x="697" y="89.500" width="15" height="5.500"/><rect x="697" y="97.500" width="15" height="5.100"/>
<!-- 5,6 disabled docs, 7 lines -->
<g stroke="#dcdcdc" stroke-width="1.100">
<path d="M737.200 74.400h18l5.200 4.600v23h-4M743.200 102h-6v-27.600"/><path d="M743.200 79.700h17.600l5.800 5.800v22h-23.400z" fill="#f9f9f9"/><ellipse cx="755" cy="93.500" rx="4.600" ry="7.400"/>
<path d="M781.500 74.400h18l5.200 4.600v23h-4M787.500 102h-6v-27.600"/><path d="M787.500 79.700h17.600l5.800 5.800v22h-23.400z" fill="#f9f9f9"/><path d="M794.500 101.500v-14.500h5.500a4 4 0 0 1 0 8h-5.500"/>
<path d="M826.600 79h27.900" stroke-width="2"/><rect x="826.600" y="82" width="27.900" height="2.500" rx="1"/><rect x="826.600" y="87" width="27.900" height="3.500" rx="1.300"/><rect x="826.600" y="92.500" width="27.900" height="4" rx="1.500"/><rect x="826.600" y="99" width="27.900" height="5" rx="1.500"/>
</g>
<path d="M878.700 75.300v31.300M1448.600 75.300v31.300" stroke="#9a9ea0" stroke-width="1.400"/>
<!-- 8 move -->
<path d="M915.500 74.500l5.500 5h-3.200v4.500h-4.600v-4.500h-3.200zM915.500 107.500l5.500-5h-3.200v-4.500h-4.600v4.500h-3.200zM899 91l5-5.500v3.200h4.500v4.600h-4.500v3.200zM932 91l-5-5.500v3.200h-4.500v4.600h4.500v3.200z"/><rect x="913.500" y="89" width="4" height="4"/>
<!-- 9 rotate -->
<path d="M960.300 84l11.600 11.600l-11.600 11.600l-11.600-11.600z"/><path d="M945.500 96.500a15.500 15.500 0 0 1 25-17"/><path d="M967 84.600l6.600-7.300l2.900 10.200z"/>
<!-- 10 scale -->
<rect x="989.300" y="75.300" width="31.700" height="31.300" stroke-dasharray="3.500 3"/><rect x="989.300" y="89.200" width="17.200" height="17.400" fill="#f9f9f9" stroke-width="1.600"/>
<path d="M1008 88.500l6.500-6.500M1011 80h6v6z" stroke-width="1.300"/>
<g stroke="#d2d2d2" stroke-width="1.100">
<!-- 11 lay flat (disabled) -->
<path d="M1050.500 75.500l17.500 4.800l-5 17.500l-17.500-4.800z"/><path d="M1043.500 88.500l-5 3.500M1034.500 92.500l7.500 1.500l-5.500 6.500z"/><rect x="1037.500" y="103" width="29.500" height="3" rx="1.500"/>
<!-- 12 cut -->
<rect x="1081.300" y="75.300" width="28.500" height="13.100"/><path d="M1081.300 90.600h28.500" stroke-dasharray="1.500 1.500"/><rect x="1081.300" y="92.500" width="28.500" height="13.900"/>
<!-- 13 boolean -->
<rect x="1134.200" y="75.300" width="23.500" height="23"/><rect x="1124.400" y="83.400" width="23.200" height="23.200"/><rect x="1134.200" y="83.400" width="13.400" height="14.900" fill="#ececec" stroke-width="1.400"/>
<path d="M1135 93l8-9M1135 97.500l12-13M1139 98l8.500-9.500" stroke-width=".8"/>
<!-- 14 support -->
<path d="M1170.500 75.300h31v31.300h-14v-18.200h-17z"/><rect x="1172.200" y="88.400" width="11.400" height="18.200" fill="#ececec"/><path d="M1173 96l8-8M1173 101l10-10M1173 106l10-10.500M1178 106.500l5.500-5.500" stroke-width=".8"/>
<!-- 15 seam cube -->
<path d="M1215.200 85.200h21.500v21.400h-21.500zM1215.200 85.200l9.800-9.900h21.800l-10.100 9.900M1246.800 75.300v21.400l-10.100 9.900"/><path d="M1220.500 87c3 2 3.500 6 4.500 9s2 6 3 10" stroke-dasharray="1.300 1.800"/>
<!-- 16 text -->
<path d="M1260.500 75.300h24.100v5.200h-9.300v25.800h-5.700v-25.800h-9.100z"/>
<!-- 17 paint -->
<path d="M1319.500 76L1333.400 90L1318 106L1304 91Z M1305 90.400H1333"/><path d="M1308 75l11 11" stroke-width="2.500"/><path d="M1334 93.500c-2.500 4-4.500 7.300-4.500 9.800a4.500 4.500 0 0 0 9 0c0-2.500-2-5.800-4.500-9.800z"/>
</g>
<!-- 18 measure (active) -->
<rect x="1351.400" y="84.200" width="29.600" height="13.400" stroke="#262e30" stroke-width="1.300" fill="#fcfcfc"/>
<path d="M1354.500 85v3M1357.500 85v2.500M1360.500 85v5M1363.500 85v2.500M1366.500 85v3M1369.500 85v2.500M1372.500 85v5M1375.500 85v2.500M1378 85v3" stroke="#6a95ff" stroke-width="1"/>
<!-- 19 assemble -->
<rect x="1398.400" y="96.400" width="29.600" height="9.400" stroke-width="1.500"/><rect x="1405.500" y="89.200" width="15" height="7.200" stroke-dasharray="1.200 1.200"/>
<path d="M1410.300 76.200l13.600 6.600l-3.200 5.600l-13.300-7.300z"/><path d="M1404.500 83l-4.500 3.300M1396 86.800l8 2.500l-5.500 4.700z"/>
<!-- 20 puzzle -->
<path d="M1469.500 82h12.300c-1.300 1.500-2.300 2.800-1.800 4.500s2.300 2.300 2.300 4.300v3.200M1469.500 82v25.300h25.500v-13.300h-3.700c-.3-1.800-1.500-2.800-3-2.800s-2.700 1-3 2.800h-3M1469.500 94h4.200c.5 2 1.600 3 3.200 3s2.800-1 3.300-3h2.100M1482.300 107.300v-4.300c1.600-.5 2.600-1.600 2.600-3.200s-1-2.600-2.600-3.300v-2.500"/>
<path d="M1492.600 74.300l9.100 8.700l-10 8.600l-2.800-2.700c1-1.700.8-3-.3-4s-2.500-1-4 .1l-1.700-1.600c1.400-1.600 1.500-2.900.5-4s-2.300-1.200-3.800-.4l3.700-3.400c1.500 1 2.900 1 3.900 0s1-2.200.1-3.700z"/>
<text x="638.500" y="85" font-size="6" font-weight="bold" stroke="none" fill="#3a4245" font-family="Liberation Sans, sans-serif" textLength="12.500" lengthAdjust="spacingAndGlyphs">AUTO</text>
<text x="1279.700" y="106" font-size="24" fill="none" stroke="#d2d2d2" stroke-width="1" font-family="Liberation Sans, sans-serif" textLength="11.500" lengthAdjust="spacingAndGlyphs">a</text>
</svg>
<div class="abs" style="left:1317px;top:116px;width:319px;height:265px;background:#fff;border-radius:3px 0 0 3px"></div>
<span class="t" style="left:1337px;top:131px;font-size:12.500px;color:#3cbcc0;letter-spacing:0.21px">Selection 1&nbsp; Circle (Diameter: 50.000 mm)</span>
<span class="t" style="left:1337px;top:163px;font-size:12.500px;color:#c43cc0;letter-spacing:0.25px">Selection 2&nbsp; Edge (Length: 24.500 mm)</span>
<div class="abs" style="left:1593px;top:126px;width:24px;height:22px;border:1px solid #8c8c8c;border-radius:3px;background:#fdfdfd"></div>
<div class="abs" style="left:1579px;top:158px;width:24px;height:22px;border:1px solid #8c8c8c;border-radius:3px;background:#fdfdfd"></div>
<svg class="abs" style="left:1593px;top:126px" width="24" height="22" viewBox="0 0 24 22" fill="none" stroke="#ee6618" stroke-width="1.800" stroke-linecap="round" stroke-linejoin="round"><path d="M10.500 6.200a5.300 5.300 0 1 1-3.600 5.800"/><path d="M12.500 3l-3 3.200l3.300 2.600" /></svg>
<svg class="abs" style="left:1579px;top:158px" width="24" height="22" viewBox="0 0 24 22" fill="none" stroke="#ee6618" stroke-width="1.800" stroke-linecap="round" stroke-linejoin="round"><path d="M10.500 6.200a5.300 5.300 0 1 1-3.600 5.800"/><path d="M12.500 3l-3 3.200l3.300 2.600" /></svg>
<div class="abs" style="left:1327px;top:190px;width:300px;height:1px;background:#e2e2e2"></div>
<span class="t" style="left:1337px;top:202px;font-size:12.500px;color:#323a3d;letter-spacing:0.2px">Measure</span>
<span class="t" style="left:1337px;top:229px;font-size:12.500px;color:#4479fb;letter-spacing:0.2px">Distance</span>
<span class="t" style="left:1396px;top:229px;font-size:12.500px;color:#323a3d;letter-spacing:0.2px">89.089 mm</span>
<div class="abs" style="left:1469px;top:227px;width:24px;height:22px;border:1px solid #8c8c8c;border-radius:3px;background:#fdfdfd"></div>
<svg class="abs" style="left:1469px;top:227px" width="24" height="22" viewBox="0 0 24 22" fill="none" stroke-width="1"><path d="M5.500 4.500h7l2 2v8h-9z" stroke="#555" fill="#e8e8e8"/><path d="M8.500 7.500h7l2.500 2.500v8h-9.500z" stroke="#2a9d8f" fill="#d8f3ee"/><path d="M10.500 11.500h6M10.500 13.500h6M10.500 15.500h6" stroke="#2a9d8f"/></svg>
<span class="t" style="left:1337px;top:255px;font-size:12.500px;color:#f47c7c">X:</span>
<span class="t" style="left:1337px;top:280px;font-size:12.500px;color:#86e486">Y:</span>
<span class="t" style="left:1337px;top:304px;font-size:12.500px;color:#7c86f4">Z:</span>
<div class="box" style="left:1396px;top:253px;width:55px;height:21px;border-radius:2px;border-color:#c8c8c8"></div>
<div class="box" style="left:1396px;top:278px;width:55px;height:21px;border-radius:2px;border-color:#c8c8c8"></div>
<div class="box" style="left:1396px;top:303px;width:55px;height:21px;border-radius:2px;border-color:#c8c8c8"></div>
<span class="t" style="left:1401px;top:258px;font-size:12.500px;color:#9a9a9a">14.57</span>
<span class="t" style="left:1401px;top:283px;font-size:12.500px;color:#9a9a9a">-84.11</span>
<span class="t" style="left:1401px;top:308px;font-size:12.500px;color:#9a9a9a">-25.50</span>
<div class="abs" style="left:1327px;top:336px;width:300px;height:1px;background:#e2e2e2"></div>
<svg class="abs" style="left:1340px;top:351px" width="21" height="15" viewBox="0 0 21 15" fill="none" stroke="#4479fb" stroke-width="1.100"><rect x="1" y="1.500" width="19" height="11.500" rx="1.500"/><path d="M3.500 4.500h1.500M6.500 4.500h1.500M9.500 4.500h1.500M12.500 4.500h1.500M15.500 4.500h1.500M3.500 7h1.500M6.500 7h1.500M9.500 7h1.500M12.500 7h1.500M15.500 7h1.500M4 10h2M7.500 10h6M15 10h2" stroke-width="1.500"/></svg>
<div class="abs" style="left:1252px;top:800px;width:375px;height:45px;background:#fff;border:1px solid #5a4ae8;border-radius:4px;overflow:hidden"><div class="abs" style="left:0;top:0;width:8px;height:45px;background:#4a32e0"></div></div>
<span class="t" style="left:1267px;top:817px;font-size:12.500px;color:#323a3d;letter-spacing:0.34px">Number of currently selected objects: 3</span>
<svg class="abs" style="left:1593px;top:810px" width="26" height="26" viewBox="0 0 26 26"><circle cx="13" cy="13" r="12.500" fill="#ececec"/><path d="M6.500 6.500l13 13M19.500 6.500l-13 13" stroke="#6a6a6a" stroke-width="1.200"/></svg>
<div id="bottomedge" class="abs"></div>
</div>
</body>
</html>
